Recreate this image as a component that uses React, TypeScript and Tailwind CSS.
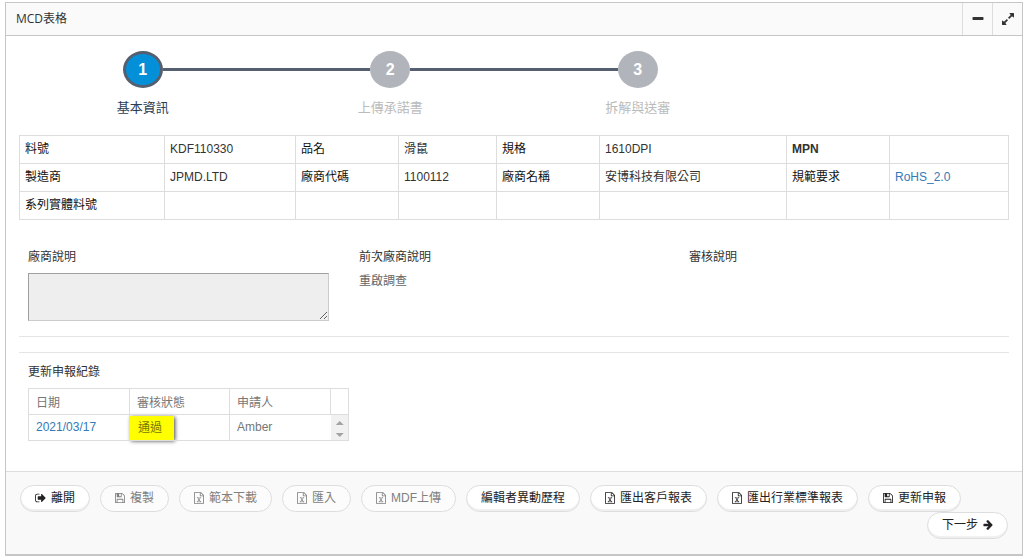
import React from "react";

const ICONS = {
  minus:
    "M1600 736v192q0 40-28 68t-68 28h-1216q-40 0-68-28t-28-68v-192q0-40 28-68t68-28h1216q40 0 68 28t28 68z",
  expand:
    "M883 1056q0 13-10 23l-332 332 144 144q19 19 19 45t-19 45-45 19h-448q-26 0-45-19t-19-45v-448q0-26 19-45t45-19 45 19l144 144 332-332q10-10 23-10t23 10l114 114q10 10 10 23zm781-864v448q0 26-19 45t-45 19-45-19l-144-144-332 332q-10 10-23 10t-23-10l-114-114q-10-10-10-23t10-23l332-332-144-144q-19-19-19-45t19-45 45-19h448q26 0 45 19t19 45z",
  signOut:
    "M704 1440q0 4 1 20t.5 26.5-3 23.5-10 19.5-20.5 6.5h-320q-119 0-203.5-84.5t-84.5-203.5v-704q0-119 84.5-203.5t203.5-84.5h320q13 0 22.5 9.5t9.5 22.5q0 4 1 20t.5 26.5-3 23.5-10 19.5-20.5 6.5h-320q-66 0-113 47t-47 113v704q0 66 47 113t113 47h312l11.5 1 11.5 3 8 5.5 7 9 2 13.5zm928-544q0 26-19 45l-544 544q-19 19-45 19t-45-19-19-45v-288h-448q-26 0-45-19t-19-45v-384q0-26 19-45t45-19h448v-288q0-26 19-45t45-19 45 19l544 544q19 19 19 45z",
  save: "M512 1536h768v-384h-768v384zm896 0h128v-896q0-14-10-38.5t-20-34.5l-281-281q-10-10-34-20t-39-10v416q0 40-28 68t-68 28h-576q-40 0-68-28t-28-68v-416h-128v1280h128v-416q0-40 28-68t68-28h832q40 0 68 28t28 68v416zm-384-928v-320q0-13-9.5-22.5t-22.5-9.5h-192q-13 0-22.5 9.5t-9.5 22.5v320q0 13 9.5 22.5t22.5 9.5h192q13 0 22.5-9.5t9.5-22.5zm640 32v928q0 40-28 68t-68 28h-1344q-40 0-68-28t-28-68v-1344q0-40 28-68t68-28h928q40 0 88 20t76 48l280 280q28 28 48 76t20 88z",
  excel:
    "M1596 380q28 28 48 76t20 88v1152q0 40-28 68t-68 28h-1344q-40 0-68-28t-28-68v-1600q0-40 28-68t68-28h896q40 0 88 20t76 48zm-444-244v376h376q-10-29-22-41l-313-313q-12-12-41-22zm384 1528v-1024h-416q-40 0-68-28t-28-68v-416h-768v1536h1280zm-979-234v106h281v-106h-75l103-161q5-7 10-16.5t7.5-13.5 3.5-4h2q1 4 5 10 2 4 4.5 7.5t6 8 6.5 8.5l107 161h-76v106h291v-106h-68l-192-273 195-282h67v-107h-279v107h74l-103 159q-4 7-10 16.5t-9 13.5l-2 3h-2q-1-4-5-10-6-11-17-23l-106-159h76v-107h-290v107h68l189 272-194 283h-68z",
  arrowRight:
    "M1600 960q0 54-37 91l-651 651q-39 37-91 37-51 0-90-37l-75-75q-38-38-38-91t38-91l293-293h-704q-52 0-84.5-37.5t-32.5-90.5v-128q0-53 32.5-90.5t84.5-37.5h704l-293-294q-38-36-38-90t38-90l75-75q38-38 90-38 53 0 91 38l651 651q37 35 37 90z",
};

type IconName = keyof typeof ICONS;

const VIEW_BOXES: Record<IconName, string> = {
  minus: "0 0 1792 1792",
  expand: "0 0 1792 1792",
  signOut: "64 0 1600 1792",
  save: "128 0 1536 1792",
  excel: "128 0 1536 1792",
  arrowRight: "64 64 1600 1792",
};

function Icon({ name, className }: { name: IconName; className: string }) {
  return (
    <svg viewBox={VIEW_BOXES[name]} fill="currentColor" aria-hidden="true" className={className}>
      <path d={ICONS[name]} />
    </svg>
  );
}

const steps = [
  { label: "基本資訊", active: true },
  { label: "上傳承諾書", active: false },
  { label: "拆解與送審", active: false },
];

function Stepper() {
  return (
    <ol className="grid grid-cols-4">
      {steps.map((step, i) => (
        <li key={step.label} className="flex flex-col items-center">
          <div className="flex w-full items-center">
            <span className={i === 0 ? "h-[3px] flex-1" : "h-[3px] flex-1 bg-[#546070]"} />
            <span
              className={
                step.active
                  ? "flex h-[37px] w-10 items-center justify-center rounded-[50%] border-3 border-[#546070] bg-[#0390d9] text-base font-bold text-white"
                  : "flex h-[37px] w-10 items-center justify-center rounded-[50%] bg-[#b1b5bb] text-base font-bold text-white"
              }
            >
              {i + 1}
            </span>
            <span
              className={i === steps.length - 1 ? "h-[3px] flex-1" : "h-[3px] flex-1 bg-[#546070]"}
            />
          </div>
          <span
            className={
              step.active
                ? "mt-2.5 text-[13px] leading-5 text-[#2b3d53]"
                : "mt-2.5 text-[13px] leading-5 text-[#bbbbbb]"
            }
          >
            {step.label}
          </span>
        </li>
      ))}
    </ol>
  );
}

const details = [
  ["料號", "KDF110330", "品名", "滑鼠", "規格", "1610DPI", "MPN", ""],
  ["製造商", "JPMD.LTD", "廠商代碼", "1100112", "廠商名稱", "安博科技有限公司", "規範要求", "RoHS_2.0"],
  ["系列實體料號", "", "", "", "", "", "", ""],
];

function DetailTable() {
  return (
    <table className="mt-[17px] w-full table-fixed border-collapse text-left text-[#333]">
      <colgroup>
        <col className="w-[145px]" />
        <col className="w-[131px]" />
        <col className="w-[103px]" />
        <col className="w-[98px]" />
        <col className="w-[103px]" />
        <col className="w-[187px]" />
        <col className="w-[103px]" />
        <col className="w-[119px]" />
      </colgroup>
      <tbody>
        {details.map((row) => (
          <tr key={row[0]} className="h-7">
            {row.map((text, i) =>
              i % 2 === 0 && text ? (
                <th
                  key={i}
                  scope="row"
                  className={
                    text === "MPN"
                      ? "border border-[#dddddd] px-[5px] pb-0.5 font-bold"
                      : "border border-[#dddddd] px-[5px] pb-0.5 font-normal text-[#111]"
                  }
                >
                  {text}
                </th>
              ) : (
                <td key={i} className="border border-[#dddddd] px-[5px] pb-0.5">
                  {text === "RoHS_2.0" ? (
                    <a href="#rohs" className="text-[#337ab7]">
                      {text}
                    </a>
                  ) : (
                    text
                  )}
                </td>
              ),
            )}
          </tr>
        ))}
      </tbody>
    </table>
  );
}

function RecordTable() {
  return (
    <table
      aria-labelledby="records"
      className="mt-[7px] w-[321px] table-fixed border-collapse border border-[#dddddd] text-left text-[#777]"
    >
      <colgroup>
        <col className="w-[101px]" />
        <col className="w-[100px]" />
        <col className="w-[101px]" />
        <col className="w-[18px]" />
      </colgroup>
      <thead>
        <tr className="h-[26px]">
          <th className="border border-[#dddddd] px-[7px] pt-0.5 font-normal">日期</th>
          <th className="border border-[#dddddd] px-[7px] pt-0.5 font-normal">審核狀態</th>
          <th className="border border-[#dddddd] px-[7px] pt-0.5 font-normal">申請人</th>
          <td className="border border-[#dddddd]" />
        </tr>
      </thead>
      <tbody>
        <tr className="h-[26px]">
          <td className="border border-[#dddddd] px-[7px] pb-0.5">
            <a href="#record" className="text-[#337ab7]">
              2021/03/17
            </a>
          </td>
          <td className="border border-[#dddddd] p-0">
            <span className="flex h-6 w-11 items-center bg-[#ffff00] px-2 text-[#77770a] shadow-[1px_1px_4px_rgba(0,0,0,0.75)]">
              通過
            </span>
          </td>
          <td className="border-y border-l border-[#dddddd] px-[7px] pb-0.5">Amber</td>
          <td className="border-y border-r border-[#dddddd] bg-[#f1f1f1] p-0">
            <svg viewBox="0 0 17 24" className="mx-auto block h-6 w-full" fill="#a3a3a3" aria-hidden="true">
              <path d="M8.5 5l4 4h-8zM8.5 21l4-4h-8z" />
            </svg>
          </td>
        </tr>
      </tbody>
    </table>
  );
}

type Action = { label: string; icon?: IconName; disabled?: boolean };

const actions: Action[] = [
  { label: "離開", icon: "signOut" },
  { label: "複製", icon: "save", disabled: true },
  { label: "範本下載", icon: "excel", disabled: true },
  { label: "匯入", icon: "excel", disabled: true },
  { label: "MDF上傳", icon: "excel", disabled: true },
  { label: "編輯者異動歷程" },
  { label: "匯出客戶報表", icon: "excel" },
  { label: "匯出行業標準報表", icon: "excel" },
  { label: "更新申報", icon: "save" },
];

function ActionButton({ label, icon, disabled }: Action) {
  return (
    <button
      type="button"
      disabled={disabled}
      className={
        disabled
          ? "flex h-[27px] items-center gap-[5px] rounded-full border border-[#dddddd] bg-[#fcfcfc] px-3.5 pb-0.5 text-[#808080]"
          : "flex h-[27px] items-center gap-[5px] rounded-full border border-[#dddddd] bg-white px-3.5 pb-0.5 text-[#222] shadow-[inset_0_-2px_0_#f0f0f0]"
      }
    >
      {icon && (
        <Icon name={icon} className={icon === "signOut" ? "h-3 w-[11px]" : "h-3 w-2.5"} />
      )}
      {label}
    </button>
  );
}

export default function App() {
  return (
    <div className="pt-0.5 pr-1.5 pl-[5px] font-['Liberation_Sans','Noto_Sans_CJK_TC',sans-serif] text-xs">
      <main className="border border-b-2 border-[#c6c6c6] bg-white">
        <header className="flex h-[33px] items-stretch border-b border-[#c6c6c6] bg-[#fafafa] text-[#333]">
          <h1 className="flex flex-1 items-center pl-2.5 font-['Open_Sans','Noto_Sans_CJK_TC',sans-serif] text-xs">
            MCD表格
          </h1>
          <button type="button" aria-label="收合" className="flex w-[30px] items-center justify-center border-l border-[#dddddd]">
            <Icon name="minus" className="size-3.5" />
          </button>
          <button type="button" aria-label="全螢幕" className="flex w-[30px] items-center justify-center border-l border-[#dddddd]">
            <Icon name="expand" className="size-3.5" />
          </button>
        </header>

        <div className="px-[13px] pt-[15px] pb-[30px]">
          <Stepper />
          <DetailTable />

          <div className="mt-7 grid grid-cols-3 leading-[18px] text-[#333]">
            <div className="px-[9px]">
              <label htmlFor="vendor-note" className="block">
                廠商說明
              </label>
              <textarea
                id="vendor-note"
                readOnly
                className="mt-[7px] block h-12 w-[301px] max-w-full border border-t-[#a0a0a0] border-r-[#cccccc] border-b-[#cccccc] border-l-[#a0a0a0] bg-[#eeeeee]"
              />
            </div>
            <div className="px-2.5">
              <p>前次廠商說明</p>
              <p className="mt-1.5 text-[#666]">重啟調查</p>
            </div>
            <div className="px-2.5">
              <p>審核說明</p>
            </div>
          </div>

          <hr className="mt-[15px] border-[#e5e5e5]" />
          <hr className="mt-[15px] border-[#e5e5e5]" />

          <section className="px-[9px] pt-2.5">
            <h2 id="records" className="leading-[18px] text-[#333]">
              更新申報紀錄
            </h2>
            <RecordTable />
          </section>
        </div>

        <footer className="flex flex-wrap gap-x-2.5 border-t border-[#dddddd] bg-[#f9f9f9] px-3.5 pt-[13px] pb-[15px]">
          {actions.map((action) => (
            <ActionButton key={action.label} {...action} />
          ))}
          <button
            type="button"
            className="ml-auto flex h-[27px] items-center gap-[5px] rounded-full border border-[#dddddd] bg-white px-3.5 pb-0.5 text-[#222] shadow-[inset_0_-2px_0_#f0f0f0]"
          >
            下一步
            <Icon name="arrowRight" className="h-3 w-2.5" />
          </button>
        </footer>
      </main>
    </div>
  );
}
